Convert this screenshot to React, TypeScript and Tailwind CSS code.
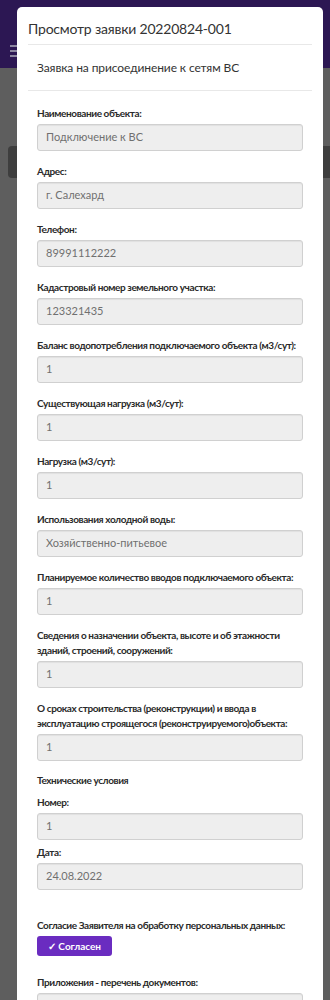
import React from "react";

interface Field {
  label: string;
  value: string;
}

const fields: Field[] = [
  { label: "Наименование объекта:", value: "Подключение к ВС" },
  { label: "Адрес:", value: "г. Салехард" },
  { label: "Телефон:", value: "89991112222" },
  { label: "Кадастровый номер земельного участка:", value: "123321435" },
  { label: "Баланс водопотребления подключаемого объекта (м3/сут):", value: "1" },
  { label: "Существующая нагрузка (м3/сут):", value: "1" },
  { label: "Нагрузка (м3/сут):", value: "1" },
  { label: "Использования холодной воды:", value: "Хозяйственно-питьевое" },
  { label: "Планируемое количество вводов подключаемого объекта:", value: "1" },
  {
    label: "Сведения о назначении объекта, высоте и об этажности зданий, строений, сооружений:",
    value: "1",
  },
  {
    label:
      "О сроках строительства (реконструкции) и ввода в эксплуатацию строящегося (реконструируемого)объекта:",
    value: "1",
  },
];

function ReadonlyInput({ value }: { value: string }) {
  return (
    <div className="h-[27px] w-full rounded-[3px] border border-[#d0d0d0] bg-[#eeeeee] px-[8px] flex items-center text-[11px] text-[#707070] shadow-[inset_0_1px_1px_rgba(0,0,0,0.06)]">
      {value}
    </div>
  );
}

function Label({ children }: { children: React.ReactNode }) {
  return (
    <div className="text-[10px] leading-[15px] font-bold tracking-[-0.4px] text-[#2a2a2a] mb-[3px]">
      {children}
    </div>
  );
}

export default function App() {
  return (
    <div
      className="relative h-[1000px] w-[330px] overflow-hidden bg-[#5e5e5e]"
      style={{ fontFamily: 'Lato, "Noto Sans", sans-serif' }}
    >
      {/* Dimmed page behind the modal */}
      <div className="absolute inset-0">
        <div className="h-[68px] bg-[#2c1753]">
          <div className="absolute left-[10px] top-[45px] flex flex-col gap-[3px]">
            <span className="block h-[2px] w-[8px] bg-[#8c86a0]" />
            <span className="block h-[2px] w-[8px] bg-[#8c86a0]" />
            <span className="block h-[2px] w-[8px] bg-[#8c86a0]" />
          </div>
        </div>
        <div className="absolute left-[8px] top-[146px] h-[32px] w-[330px] rounded-[4px] bg-[#3e3e3e]" />
      </div>

      {/* Modal */}
      <div className="relative ml-[17px] mt-[7px] w-[306px] rounded-t-[5px] bg-white pb-[40px]">
        <div className="px-[11px]">
          <div className="h-[38px] flex items-end pb-[5px] border-b border-[#e8e8e8] text-[14px] tracking-[-0.2px] text-[#333]">
            Просмотр заявки 20220824-001
          </div>
        </div>
        <div className="px-[11px]">
          <div className="h-[46px] flex items-center pl-[9px] border-b border-[#e8e8e8] text-[12px] tracking-[-0.1px] text-[#333]">
            Заявка на присоединение к сетям ВС
          </div>
        </div>

        <div className="px-[20px] pt-[15px] flex flex-col">
          {fields.map((f, i) => (
            <div key={i} className="mb-[13px]">
              <Label>{f.label}</Label>
              <ReadonlyInput value={f.value} />
            </div>
          ))}

          <div className="text-[10px] leading-[15px] font-bold tracking-[-0.4px] text-[#2a2a2a] mb-[7px] -mt-[1px]">
            Технические условия
          </div>
          <div className="mb-[5px]">
            <Label>Номер:</Label>
            <ReadonlyInput value="1" />
          </div>
          <div className="mb-[28px]">
            <Label>Дата:</Label>
            <ReadonlyInput value="24.08.2022" />
          </div>

          <div className="mb-[19px]">
            <Label>Согласие Заявителя на обработку персональных данных:</Label>
            <button className="h-[20px] w-[75px] rounded-[3px] bg-[#6a2cc0] text-white text-[10px] font-bold flex items-center justify-center">
              ✓ Согласен
            </button>
          </div>

          <div>
            <Label>Приложения - перечень документов:</Label>
            <ReadonlyInput value="" />
          </div>
        </div>
      </div>
    </div>
  );
}
